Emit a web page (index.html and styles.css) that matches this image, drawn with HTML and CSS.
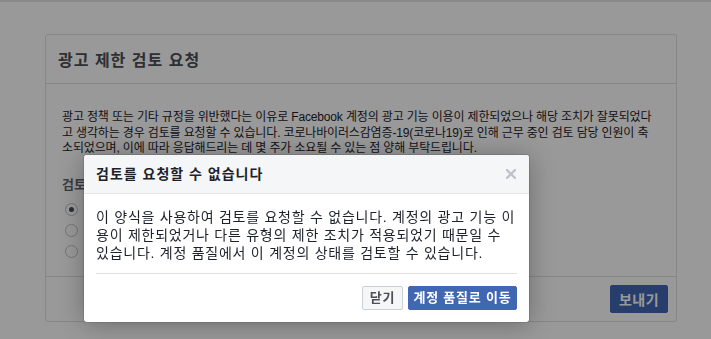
FILE: index.html
```html
<!DOCTYPE html>
<html lang="ko">
<head>
<meta charset="utf-8">
<title>광고 제한 검토 요청</title>
<link rel="stylesheet" href="styles.css">
</head>
<body>
<div class="topline"></div>
<div class="card">
  <div class="card-head"><h2 class="card-title">광고 제한 검토 요청</h2></div>
  <div class="card-body">
    <p class="intro">광고 정책 또는 기타 규정을 위반했다는 이유로 Facebook 계정의 광고 기능 이용이 제한되었으나 해당 조치가 잘못되었다고 생각하는 경우 검토를 요청할 수 있습니다. 코로나바이러스감염증-19(코로나19)로 인해 근무 중인 검토 담당 인원이 축소되었으며, 이에 따라 응답해드리는 데 몇 주가 소요될 수 있는 점 양해 부탁드립니다.</p>
    <div class="label">검토</div>
    <div class="radios">
      <div class="radio-row"><span class="radio checked"></span></div>
      <div class="radio-row"><span class="radio"></span></div>
      <div class="radio-row"><span class="radio"></span></div>
    </div>
  </div>
  <div class="card-foot"><button class="send">보내기</button></div>
</div>

<div class="overlay"></div>
<div class="modal">
  <div class="modal-head">
    <h3 class="modal-title">검토를 요청할 수 없습니다</h3>
    <svg class="close" width="10" height="10" viewBox="0 0 10 10"><path d="M1 1L9 9M9 1L1 9" stroke="#bec2c9" stroke-width="2.4" stroke-linecap="square"/></svg>
  </div>
  <div class="modal-body">이 양식을 사용하여 검토를 요청할 수 없습니다. 계정의 광고 기능 이용이 제한되었거나 다른 유형의 제한 조치가 적용되었기 때문일 수 있습니다. 계정 품질에서 이 계정의 상태를 검토할 수 있습니다.</div>
  <div class="modal-foot">
    <button class="btn btn-default">닫기</button>
    <button class="btn btn-primary">계정 품질로 이동</button>
  </div>
</div>
</body>
</html>
```
FILE: styles.css
```css
* { box-sizing: border-box; }
html, body { margin: 0; padding: 0; }
body {
  background: #fff;
  font-family: "Liberation Sans", "Noto Sans CJK KR", sans-serif;
  color: #1d2129;
  width: 711px;
  height: 339px;
  overflow: hidden;
}
.topline { height: 2px; background: #e6e6e6; }
.card {
  margin: 32px 0 0 45px;
  width: 632px;
  border: 1px solid #dddfe2;
  border-radius: 3px;
  background: #fff;
}
.card-head {
  height: 49px;
  border-bottom: 1px solid #dddfe2;
  padding: 0 12px;
  display: flex;
  align-items: center;
}
.card-title { margin: 0; font-size: 16px; font-weight: bold; color: #4b4f56; letter-spacing: 1px; }
.card-body { padding: 26px 16px 14px; }
.intro { margin: 0 5px 0 0; font-size: 12px; line-height: 15.5px; color: #1d2129; letter-spacing: -0.15px; }
.label { margin-top: 20px; font-size: 13px; line-height: 16px; font-weight: bold; color: #606770; }
.radios { margin-top: 6px; }
.radio-row { height: 21.3px; display: flex; align-items: center; padding-left: 3px; }
.radio {
  width: 13px; height: 13px; border-radius: 50%;
  border: 1px solid #bec2c9; background: #fff;
  display: flex; align-items: center; justify-content: center;
}
.radio.checked::after { content: ""; width: 5px; height: 5px; border-radius: 50%; background: #4b4f56; }
.card-foot {
  border-top: 1px solid #dddfe2;
  padding: 8px;
  display: flex;
  justify-content: flex-end;
}
.send {
  height: 28px; width: 58px;
  border: 1px solid #4267b2; border-radius: 2px;
  background: #4267b2; color: #fff;
  font: bold 14px "Liberation Sans", "Noto Sans CJK KR", sans-serif;
  letter-spacing: 0.5px;
  padding: 0;
}
.overlay { position: fixed; inset: 0; background: rgba(0,0,0,0.4); }
.modal {
  position: absolute; left: 84px; top: 155px; width: 445px;
  background: #fff; border-radius: 3px;
  box-shadow: 0 2px 26px rgba(0,0,0,0.3), 0 0 0 1px rgba(0,0,0,0.1);
}
.modal-head {
  height: 39px; background: #f5f6f7; border-bottom: 1px solid #e5e5e5;
  border-radius: 3px 3px 0 0;
  padding: 0 12px; display: flex; align-items: center; justify-content: space-between;
}
.modal-title { margin: 0; font-size: 14px; font-weight: bold; color: #1d2129; line-height: 18px; letter-spacing: 1px; }
.close { display: block; margin-right: 1px; }
.modal-body { padding: 14px 12px 0; font-size: 14px; line-height: 18px; color: #1d2129; letter-spacing: 0.75px; }
.modal-foot {
  margin: 11px 12px 0; border-top: 1px solid #dddfe2;
  padding: 12px 0; display: flex; justify-content: flex-end; gap: 5px;
}
.btn {
  height: 24px; border-radius: 2px; padding: 0;
  font: bold 13px/22px "Liberation Sans", "Noto Sans CJK KR", sans-serif;
  letter-spacing: 0.8px;
}
.btn-default { background: #f5f6f7; border: 1px solid #ccd0d5; color: #4b4f56; width: 41px; }
.btn-primary { background: #4267b2; border: 1px solid #4267b2; color: #fff; width: 109px; }
```
